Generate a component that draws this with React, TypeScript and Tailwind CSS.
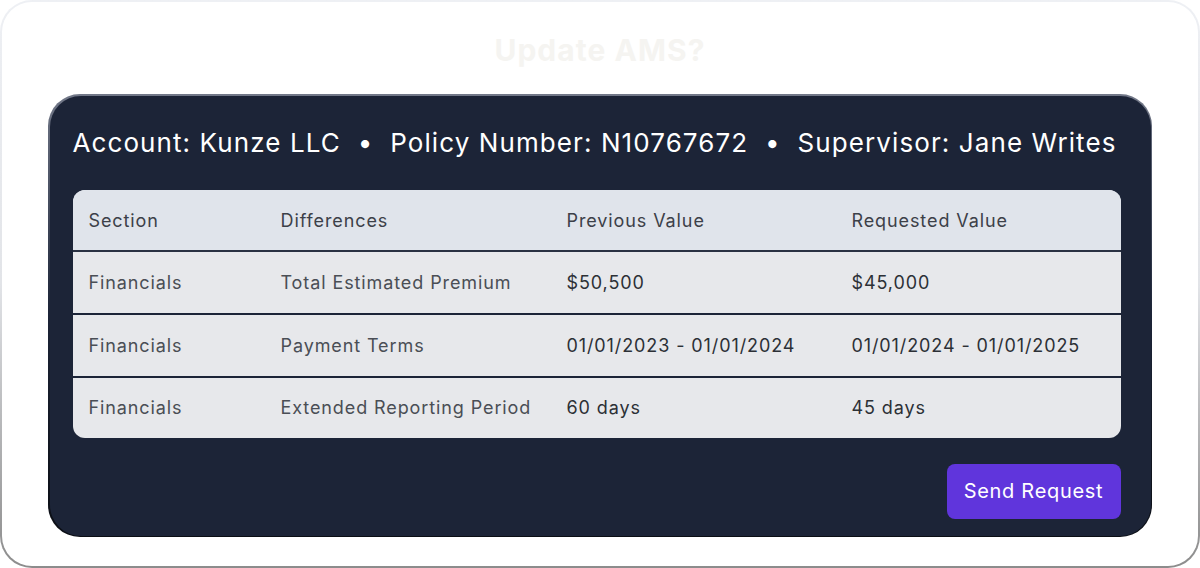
import React from "react";

const rows = [
  {
    section: "Financials",
    diff: "Total Estimated Premium",
    prev: "$50,500",
    next: "$45,000",
  },
  {
    section: "Financials",
    diff: "Payment Terms",
    prev: "01/01/2023 - 01/01/2024",
    next: "01/01/2024 - 01/01/2025",
  },
  {
    section: "Financials",
    diff: "Extended Reporting Period",
    prev: "60 days",
    next: "45 days",
  },
];

const App: React.FC = () => {
  return (
    <div
      className="w-[1200px] h-[568px] bg-white"
      style={{ fontFamily: "Inter, 'Noto Sans', sans-serif" }}
    >
      {/* Outer card with soft gradient border */}
      <div className="h-full w-full rounded-[32px] bg-gradient-to-b from-[#eef0f4] via-[#e2e4e8] to-[#8c8c8c] p-[2px]">
        <div className="flex h-full w-full flex-col rounded-[30px] bg-white px-[46px] pb-[29px]">
          <h2 className="flex h-[92px] items-center justify-center pt-[5px] text-[30px] font-bold tracking-[0.035em] text-[#f5f4f1]">
            Update AMS?
          </h2>

          {/* Dark panel */}
          <div className="flex-1 rounded-[32px] bg-gradient-to-b from-[#727888] via-[#1c2437] to-[#0b0e14] p-[1.5px]">
            <div className="flex h-full flex-col rounded-[31px] bg-[#1c2437] pl-[23px] pr-[30px]">
              <div className="flex h-[94px] items-center whitespace-pre text-[26px] tracking-[0.042em] text-white">
                Account: Kunze LLC  •  Policy Number: N10767672  •  Supervisor: Jane Writes
              </div>

              <div className="overflow-hidden rounded-xl bg-[#e7e8eb] text-lg tracking-[0.05em]">
                <div className="grid h-[62px] grid-cols-[192px_286px_285px_1fr] items-center border-b-2 border-[#2a3142] bg-[#e0e4eb] pt-[2px] text-[#3c4048]">
                  <div className="pl-4">Section</div>
                  <div className="pl-4">Differences</div>
                  <div className="pl-4">Previous Value</div>
                  <div className="pl-4">Requested Value</div>
                </div>
                {rows.map((r, i) => {
                  const last = i === rows.length - 1;
                  return (
                    <div
                      key={i}
                      className={`grid grid-cols-[192px_286px_285px_1fr] items-center ${
                        last ? "h-[60px]" : "h-[63px] border-b-2 border-[#1c2437] pt-[2px]"
                      }`}
                    >
                      <div className="pl-4 text-[#4a4e55]">{r.section}</div>
                      <div className="pl-4 text-[#4a4e55]">{r.diff}</div>
                      <div className="pl-4 text-[#2c3036]">{r.prev}</div>
                      <div className="pl-4 text-[#2c3036]">{r.next}</div>
                    </div>
                  );
                })}
              </div>

              <div className="flex justify-end pt-[26px]">
                <button className="h-[55px] w-[174px] rounded-lg bg-[#6035dc] text-xl tracking-[0.035em] text-white">
                  Send Request
                </button>
              </div>
            </div>
          </div>
        </div>
      </div>
    </div>
  );
};

export default App;
